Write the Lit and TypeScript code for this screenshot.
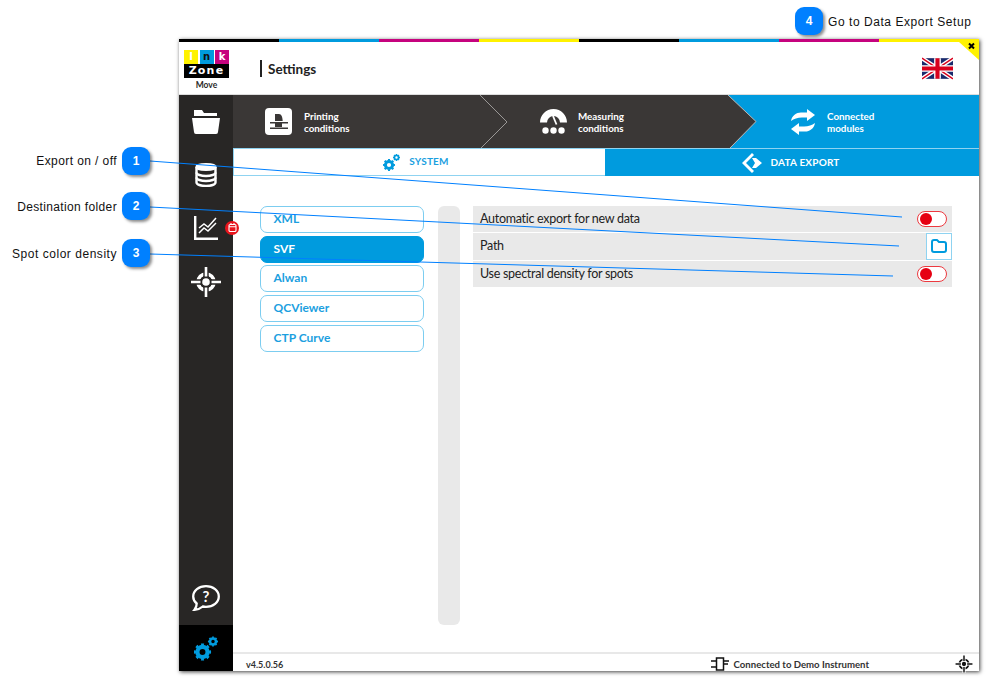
import { LitElement, html, css, svg } from "lit";
import { customElement } from "lit/decorators.js";

const target = (c: string, bg: string) => svg`<g fill="none">
  <circle cx="16" cy="16" r="8" stroke="${c}" stroke-width="3.600"/>
  <path d="M16 0v32M0 16h32" stroke="${bg}" stroke-width="5.400"/>
  <circle cx="16" cy="16" r="6" fill="${bg}"/>
  <circle cx="16" cy="16" r="3.800" fill="${c}"/>
  <path d="M16 1v9.500M16 21.500v9.500M1 16h9.500M21.500 16h9.500" stroke="${c}" stroke-width="2.600"/></g>`;

const gear = (x: number, y: number, r: number, c: string) => svg`<g fill="none" stroke="${c}">
  <circle cx="${x}" cy="${y}" r="${r * 0.6}" stroke-width="${r * 0.5}"/>
  <circle cx="${x}" cy="${y}" r="${r * 0.86}" stroke-width="${r * 0.3}" pathLength="16" stroke-dasharray="1 1" stroke-dashoffset="0.500"/></g>`;

@customElement("app-root")
export class AppRoot extends LitElement {
  static styles = css`
    :host { display: block; position: relative; width: 988px; height: 680px; box-sizing: border-box; padding: 39px 9px 9px 179px; background: #fff; overflow: hidden; font-family: Lato, sans-serif; color: #2b2a29; }
    .win { position: relative; height: 632px; display: flex; flex-direction: column; background: #fff; box-shadow: 1px 1px 4px rgba(0,0,0,.75); }
    .bar { display: flex; height: 3px; flex: none; }
    .bar i { flex: 1; }
    .k { background: #000; } .c { background: #009bde; } .m { background: #c6037e; } .y { background: #fff200; }
    .close { position: absolute; right: 0; top: 3px; width: 20px; height: 18px; }
    .head { height: 53px; flex: none; display: flex; align-items: center; box-sizing: border-box; padding: 0 26px 0 5px; border-bottom: 1px solid #ddd; }
    .logo { width: 45px; display: flex; flex-direction: column; align-items: center; margin-top: 5px; }
    .logo-top { display: grid; grid-template-columns: repeat(3, 14px); justify-content: space-between; width: 45px; height: 14px; }
    .logo-top span { display: flex; align-items: center; justify-content: center; font: 700 10px/14px "DejaVu Sans", sans-serif; color: #fff; }
    .logo-top span.c { color: #111; }
    .logo-z { width: 45px; height: 14px; background: #000; color: #fff; font: 700 11px/14px "DejaVu Sans", sans-serif; text-align: center; letter-spacing: 1.2px; }
    .move { font-size: 8.500px; line-height: 11px; margin-top: 2px; font-weight: 700; }
    .title { margin-left: 31px; padding: 1px 0 0 6px; border-left: 2px solid #222; font-size: 13.500px; font-weight: 700; line-height: 16px; flex: 1; color: #222; }
    .body { flex: 1; display: flex; min-height: 0; }
    .side { width: 54px; flex: none; background: #282625; display: flex; flex-direction: column; }
    .si { height: 53.400px; flex: none; display: flex; align-items: center; justify-content: center; position: relative; }
    .grow { flex: 1; }
    .gearcell { height: 46px; flex: none; background: #000; display: flex; align-items: center; justify-content: center; }
    .badge { position: absolute; left: 46px; top: 19px; width: 14px; height: 14px; border-radius: 50%; background: #e8141c; display: flex; align-items: center; justify-content: center; }
    .main { flex: 1; display: flex; flex-direction: column; min-width: 0; }
    .steps { height: 53px; flex: none; position: relative; display: grid; grid-template-columns: 274px 274px 198px; background: #3a3736; }
    .chev { position: absolute; inset: 0; }
    .step { position: relative; display: flex; align-items: center; color: #fff; font-size: 9.800px; font-weight: 700; line-height: 12.500px; }
    .step span { padding-top: 1px; }
    .s1 { padding-left: 32px; gap: 12px; } .s2 { padding-left: 32px; gap: 10px; } .s3 { padding-left: 9px; gap: 11px; }
    .tabs { height: 28px; flex: none; display: grid; grid-template-columns: 372px 1fr; font-size: 10px; font-weight: 700; letter-spacing: .2px; }
    .tab { display: flex; align-items: center; justify-content: center; box-sizing: border-box; }
    .tab span { padding-bottom: 2px; }
    .t1 { background: #fff; color: #1c9fdf; border: 1px solid #8fd3f1; border-right: 0; padding-right: 7px; gap: 9px; }
    .t2 { background: #009bde; color: #fff; border-top: 1px solid #8fd3f1; padding-right: 2px; gap: 8px; }
    .content { flex: 1; display: flex; box-sizing: border-box; padding: 30px 27px 27px; min-height: 0; }
    .list { width: 164px; flex: none; display: flex; flex-direction: column; gap: 2.700px; }
    .li { height: 27px; box-sizing: border-box; border: 1px solid #7ccdf0; border-radius: 7px; padding-left: 12.500px; color: #1c9fdf; font-size: 12px; font-weight: 700; line-height: 24px; }
    .li.on { background: #009bde; border-color: #009bde; color: #fff; }
    .scroll { width: 22px; flex: none; margin: 0 13px 0 14px; background: #e9e9e9; border-radius: 6px; }
    .rows { flex: 1; display: flex; flex-direction: column; gap: 1px; }
    .row { height: 26.300px; background: #e9e9e9; display: flex; align-items: center; justify-content: space-between; padding-left: 7px; font-size: 12.500px; letter-spacing: -.28px; color: #222; }
    .row span { padding-bottom: 1px; }
    .tog { width: 30px; height: 16px; box-sizing: border-box; margin-right: 5px; border: 1.500px solid #ec3a40; border-radius: 8px; background: #fff; display: flex; align-items: center; padding-left: 1.500px; }
    .tog i { width: 12px; height: 12px; border-radius: 50%; background: #e60012; }
    .fold { width: 26px; height: 26.300px; box-sizing: border-box; border: 1px solid #8fd3f1; background: #fff; display: flex; align-items: center; justify-content: center; }
    .foot { height: 19px; flex: none; box-sizing: border-box; border-top: 2px solid #e8e8e8; display: flex; align-items: center; padding: 3px 6px 0 13px; font-size: 9.600px; font-weight: 700; color: #333; }
    .ver { flex: 1; font-size: 9px; }
    .conn { display: flex; align-items: center; gap: 5px; margin-right: 86px; }
    .over { position: absolute; left: 0; top: 0; pointer-events: none; }
    .mark { position: absolute; width: 28px; height: 28px; border-radius: 9px; background: #0080ff; color: #fff; box-shadow: 2px 2px 3px rgba(0,0,0,.45); font: 700 12px/28px "Liberation Sans", sans-serif; text-align: center; }
    .lab { position: absolute; font: 12px/16px "Liberation Sans", sans-serif; color: #111; white-space: nowrap; letter-spacing: .42px; }
    .lab.r { text-align: right; width: 117px; left: 0; }
    .lab.l2 { letter-spacing: .36px; } .lab.l3 { letter-spacing: .53px; } .lab.l4 { letter-spacing: .55px; }
  `;

  render() {
    return html`
      <div class="win">
        <div class="bar"><i class="k"></i><i class="c"></i><i class="m"></i><i class="y"></i><i class="k"></i><i class="c"></i><i class="m"></i><i class="y"></i></div>
        <svg class="close" viewBox="0 0 20 18"><path d="M0 0H20V18Z" fill="#fff200"/><path d="M10 1.500l5 5M15 1.500l-5 5" stroke="#000" stroke-width="2"/></svg>
        <div class="head">
          <div class="logo">
            <div class="logo-top"><span class="y">I</span><span class="c">n</span><span class="m">k</span></div>
            <div class="logo-z">Zone</div>
            <div class="move">Move</div>
          </div>
          <div class="title">Settings</div>
          <svg width="31" height="23" viewBox="0 0 60 40">
            <rect width="60" height="40" fill="#1a2a6c"/>
            <path d="M0 0L60 40M60 0L0 40" stroke="#fff" stroke-width="8"/>
            <path d="M0 0L60 40M60 0L0 40" stroke="#d8001d" stroke-width="2.600"/>
            <path d="M30 0V40M0 20H60" stroke="#fff" stroke-width="13"/>
            <path d="M30 0V40M0 20H60" stroke="#d8001d" stroke-width="8"/>
          </svg>
        </div>
        <div class="body">
          <div class="side">
            <div class="si"><svg width="28" height="24" viewBox="0 0 28 24" fill="#fff"><path d="M2 0h8l2 3h13v3H2z"/><path d="M0 8h28l-2 14a2 2 0 0 1-2 2H4a2 2 0 0 1-2-2z"/></svg></div>
            <div class="si"><svg width="22" height="24" viewBox="0 0 22 24" fill="none" stroke="#fff" stroke-width="2.400"><ellipse cx="11" cy="4" rx="9.500" ry="2.800" fill="#fff"/><path d="M1.500 4v15.500C1.500 21.500 6 23 11 23s9.500-1.500 9.500-3.500V4"/><path d="M1.500 9.500C1.500 11.500 6 13 11 13s9.500-1.500 9.500-3.500M1.500 14.500c0 2 4.500 3.500 9.500 3.500s9.500-1.500 9.500-3.500"/></svg></div>
            <div class="si">
              <svg width="24" height="24" viewBox="0 0 24 24" fill="none" stroke="#fff"><path d="M1.200 0v22.800H24" stroke-width="2.400"/><path d="M5 12l5-4 4 3 8-9M5 17l5-5 4 3 8-8" stroke-width="1.500"/></svg>
              <div class="badge"><svg width="9" height="9" viewBox="0 0 9 9" fill="none" stroke="#fff" stroke-width="1.100"><rect x="1" y="1.500" width="7" height="7" rx="1.200"/><path d="M1 3.800h7M3 0v2M6 0v2"/></svg></div>
            </div>
            <div class="si"><svg width="32" height="32" viewBox="0 0 32 32">${target("#fff", "#282625")}</svg></div>
            <div class="grow"></div>
            <div class="si"><svg width="28" height="26" viewBox="0 0 28 26"><path d="M14 1.200C6.800 1.200 1.200 5.800 1.200 11.500c0 2.800 1.300 5.200 3.500 7 0 2.500-.9 4.700-2.200 6.300 3.300-.3 6.300-1.500 8.300-3.300 1 .2 2.100.3 3.200.3 7.200 0 12.800-4.600 12.800-10.300S21.200 1.200 14 1.200z" fill="none" stroke="#fff" stroke-width="2.300"/><text x="14" y="16.500" text-anchor="middle" fill="#fff" font-family="Lato" font-weight="700" font-size="15">?</text></svg></div>
            <div class="gearcell"><svg width="24" height="25" viewBox="0 0 24 25">${gear(8.500, 16, 8.500, "#009bde")}${gear(19, 5.500, 5, "#009bde")}</svg></div>
          </div>
          <div class="main">
            <div class="steps">
              <svg class="chev" width="746" height="53" viewBox="0 0 746 53">
                <path d="M495 0H746V53H497L523 26.500Z" fill="#009bde"/>
                <path d="M495 0L523 26.500L497 53" fill="none" stroke="#b8b8b8" stroke-width="1"/>
                <path d="M247 0L274 27L248 53" fill="none" stroke="#9a9897" stroke-width="1"/>
              </svg>
              <div class="step s1">
                <svg width="27" height="27" viewBox="0 0 27 27"><rect width="27" height="27" rx="4" fill="#fff"/><path d="M10 6h4c2.500 0 3.500 3 3.700 7H10zM5 14h18v1.500H5zM10 15.500h7V19h-7zM5 19.500h18V21H5z" fill="#3a3736"/></svg>
                <span>Printing<br />conditions</span>
              </div>
              <div class="step s2">
                <svg width="29" height="27" viewBox="0 0 29 27"><path d="M1 14.500C1 7 7 1 14.500 1S28 7 28 14.500h-7a6.500 6.500 0 0 0-13 0z" fill="#fff"/><path d="M14 8l3.500 8.500" stroke="#fff" stroke-width="1.800"/><circle cx="6.500" cy="22.500" r="3.200" fill="#fff"/><circle cx="14.500" cy="22.500" r="3.200" fill="#fff"/><circle cx="22.500" cy="22.500" r="3.200" fill="#fff"/></svg>
                <span>Measuring<br />conditions</span>
              </div>
              <div class="step s3">
                <svg width="26" height="26" viewBox="0 0 26 26" fill="#fff"><path d="M1 12C2 6 7 3 12 3.500h5V0l8 6-8 6V8.500h-5C7.500 8.500 4 10 1 12z"/><path d="M25 14c-1 6-6 9-11 8.500H9V26l-8-6 8-6v3.500h5c4.500 0 8-1.500 11-3.500z"/></svg>
                <span>Connected<br />modules</span>
              </div>
            </div>
            <div class="tabs">
              <div class="tab t1"><svg width="17" height="17" viewBox="0 0 17 17">${gear(6, 11, 6, "#009bde")}${gear(13.500, 3.500, 3.500, "#009bde")}</svg><span>SYSTEM</span></div>
              <div class="tab t2"><svg width="20" height="20" viewBox="0 0 20 20" fill="#fff"><path d="M10 0L12 2 4 10l8 8-2 2L0 10z"/><path d="M10 5h4l6 5-6 5h-4l3-5z"/></svg><span>DATA EXPORT</span></div>
            </div>
            <div class="content">
              <div class="list">
                <div class="li">XML</div><div class="li on">SVF</div><div class="li">Alwan</div><div class="li">QCViewer</div><div class="li">CTP Curve</div>
              </div>
              <div class="scroll"></div>
              <div class="rows">
                <div class="row"><span>Automatic export for new data</span><div class="tog"><i></i></div></div>
                <div class="row"><span>Path</span><div class="fold"><svg width="16" height="14" viewBox="0 0 16 14" fill="none" stroke="#009bde" stroke-width="2"><path d="M1 3a2 2 0 0 1 2-2h3l2 2h5a2 2 0 0 1 2 2v6a2 2 0 0 1-2 2H3a2 2 0 0 1-2-2z" stroke-linejoin="round"/></svg></div></div>
                <div class="row"><span>Use spectral density for spots</span><div class="tog"><i></i></div></div>
              </div>
            </div>
            <div class="foot">
              <span class="ver">v4.5.0.56</span>
              <div class="conn"><svg width="18" height="14" viewBox="0 0 18 14" fill="none" stroke="#111" stroke-width="1.500"><rect x="5.500" y="1" width="7" height="12"/><path d="M0 4h5M0 10h5M13 4h5M13 7h4"/></svg><span>Connected to Demo Instrument</span></div>
              <svg width="18" height="18" viewBox="0 0 32 32">${target("#111", "#fff")}</svg>
            </div>
          </div>
        </div>
      </div>
      <svg class="over" width="988" height="680" fill="none" stroke="#0080ff" stroke-width="1">
        <path d="M150 161L902 217M150 207L899 246M150 254L893 276"/>
      </svg>
      <div class="mark" style="left:122px;top:147px">1</div>
      <div class="mark" style="left:122px;top:192px">2</div>
      <div class="mark" style="left:122px;top:239px">3</div>
      <div class="mark" style="left:795px;top:7px">4</div>
      <div class="lab r" style="top:153px">Export on / off</div>
      <div class="lab r l2" style="top:199px">Destination folder</div>
      <div class="lab r l3" style="top:246px">Spot color density</div>
      <div class="lab l4" style="left:828px;top:14px">Go to Data Export Setup</div>
    `;
  }
}
